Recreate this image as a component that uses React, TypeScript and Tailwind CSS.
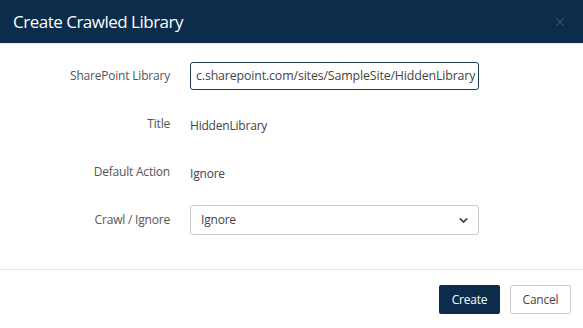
import React from 'react';
import { ChevronDown, X } from 'lucide-react';

const font = { fontFamily: '"Open Sans", "Noto Sans", sans-serif' };

const Row: React.FC<{ label: string; children: React.ReactNode; className?: string }> = ({ label, children, className }) => (
  <div className={`flex items-center ${className ?? ''}`}>
    <div className="w-[190px] shrink-0 pr-[20px] text-right text-[12px] tracking-[-0.2px] text-[#555]">{label}</div>
    <div className="w-[289px]">{children}</div>
  </div>
);

const App: React.FC = () => {
  return (
    <div className="w-[583px] h-[328px] bg-white flex flex-col" style={font}>
      {/* Header */}
      <div className="h-[44px] bg-[#0b2c4b] flex items-center justify-between pl-[13px] pr-[16px] border-b border-[#e5e5e5]">
        <span className="text-white text-[17px] tracking-[-0.5px]">Create Crawled Library</span>
        <X size={14} className="text-[#2f4e6b]" strokeWidth={2} />
      </div>

      {/* Body */}
      <div className="flex flex-col pt-[18px] h-[226px] border-b border-[#e5e5e5]">
        <Row label="SharePoint Library">
          <div className="h-[28px] border border-[#1f3b57] rounded-[3px] flex items-center pl-[5px] text-[12.4px] tracking-[-0.15px] text-[#444] overflow-hidden whitespace-nowrap">
            c.sharepoint.com/sites/SampleSite/HiddenLibrary
          </div>
        </Row>
        <Row label="Title" className="mt-[20px] h-[27px]">
          <span className="text-[12px] tracking-[-0.2px] text-[#444]">HiddenLibrary</span>
        </Row>
        <Row label="Default Action" className="mt-[21px] h-[27px]">
          <span className="text-[12px] tracking-[-0.2px] text-[#444]">Ignore</span>
        </Row>
        <Row label="Crawl / Ignore" className="mt-[20px]">
          <div className="h-[30px] border border-[#ccc] rounded-[3px] flex items-center justify-between pl-[10px] pr-[8px] text-[12px] tracking-[-0.2px] text-[#444]">
            <span>Ignore</span>
            <ChevronDown size={13} strokeWidth={3} className="text-[#444]" />
          </div>
        </Row>
      </div>

      {/* Footer */}
      <div className="flex justify-end items-center gap-[10px] pr-[12px] pt-[15px]">
        <button className="h-[29px] w-[61px] bg-[#0b2c4b] text-white text-[12px] tracking-[-0.2px] rounded-[2px]">Create</button>
        <button className="h-[29px] w-[61px] bg-white border border-[#ccc] text-[#444] text-[12px] tracking-[-0.2px] rounded-[2px]">Cancel</button>
      </div>
    </div>
  );
};

export default App;
